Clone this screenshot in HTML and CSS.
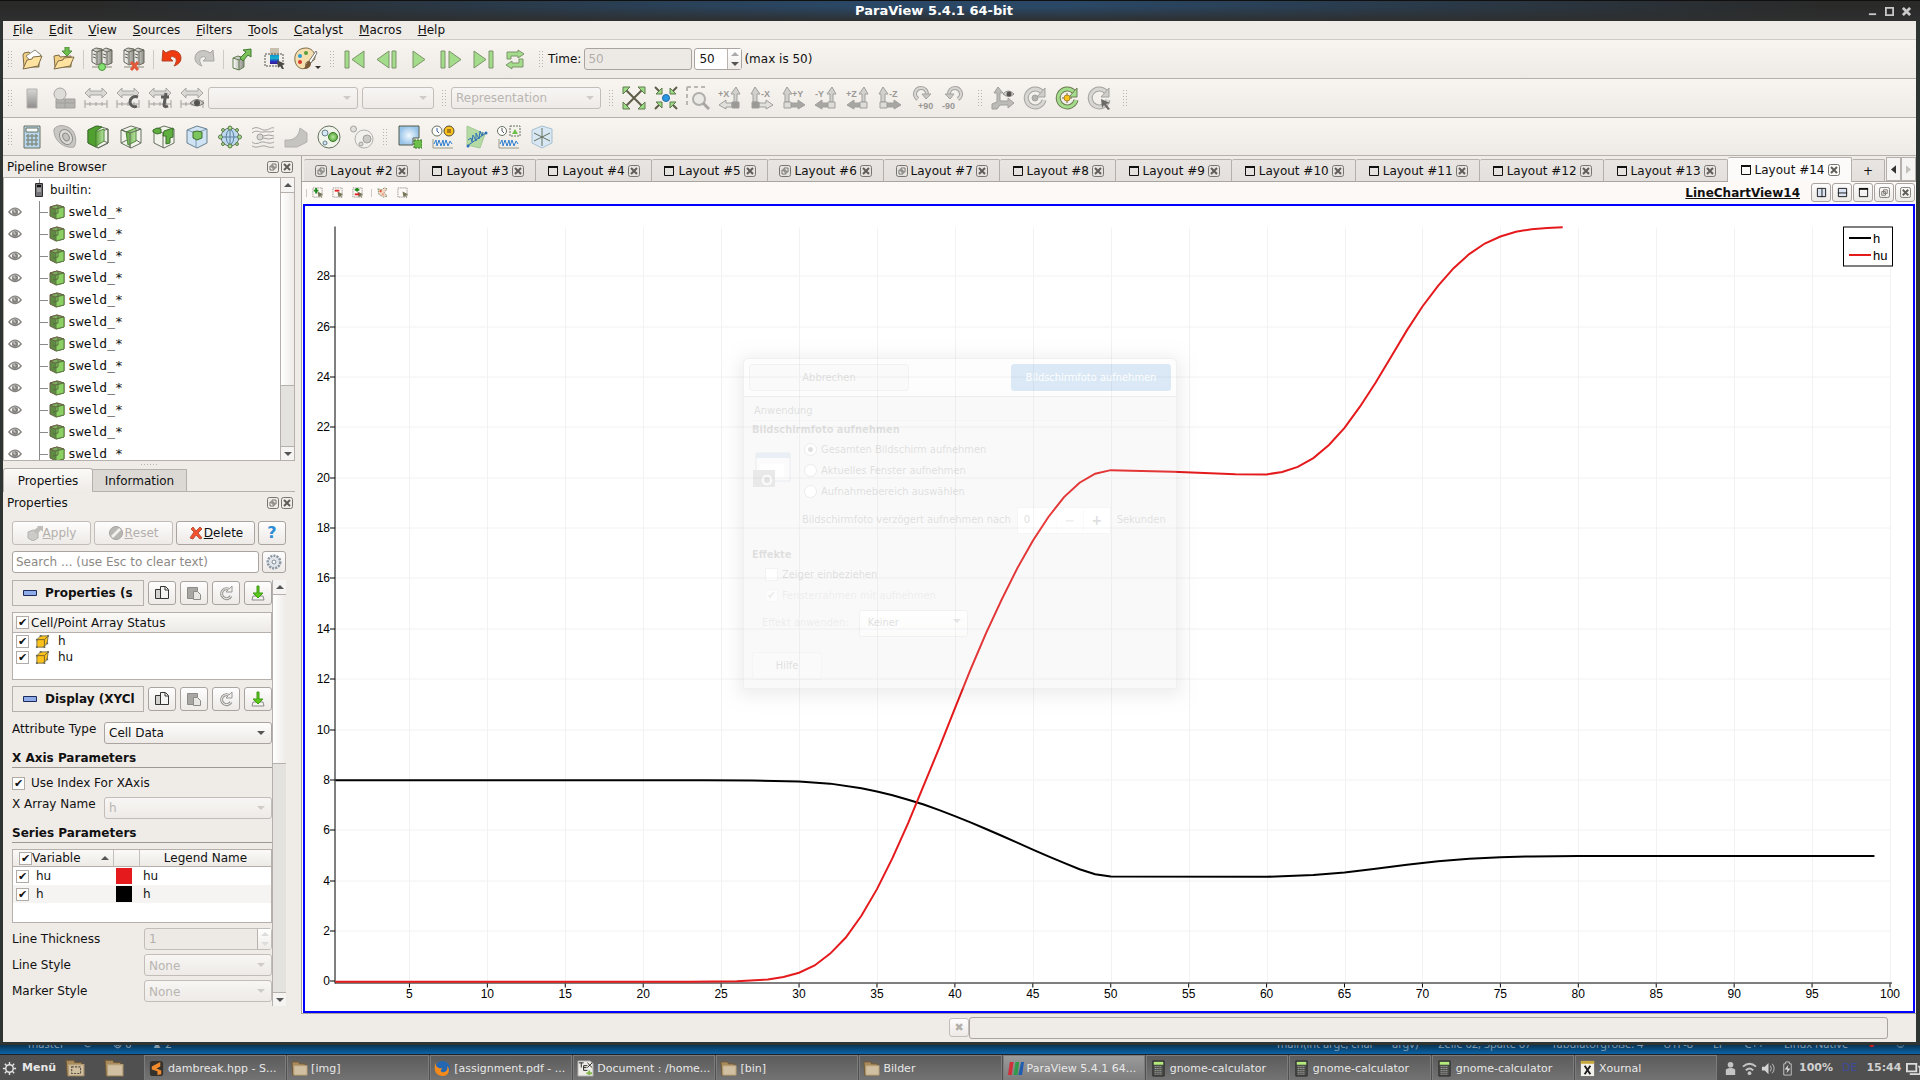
FILE: index.html
```html
<!DOCTYPE html>
<html lang="en">
<head>
<meta charset="utf-8">
<title>ParaView 5.4.1 64-bit</title>
<link rel="stylesheet" href="styles.css">
</head>
<body>
<svg class="defs" aria-hidden="true">
  <defs>
    <linearGradient id="g-steel" x1="0" y1="0" x2="1" y2="0"><stop offset="0" stop-color="#fff"/><stop offset="1" stop-color="#8c8c84"/></linearGradient>
    <linearGradient id="g-gray" x1="0" y1="0" x2="0" y2="1"><stop offset="0" stop-color="#d8d7d5"/><stop offset="1" stop-color="#8f8d8b"/></linearGradient>
    <linearGradient id="g-rain" x1="0" y1="0" x2="0" y2="1"><stop offset="0" stop-color="#0b8fd8"/><stop offset=".35" stop-color="#18b7c9"/><stop offset=".7" stop-color="#2438c8"/><stop offset="1" stop-color="#3a1a8c"/></linearGradient>
    <linearGradient id="g-green" x1="0" y1="0" x2="1" y2="0"><stop offset="0" stop-color="#5da53a"/><stop offset="1" stop-color="#b9e2a4"/></linearGradient>
    <radialGradient id="g-blue"><stop offset="0" stop-color="#f2f9ff"/><stop offset="1" stop-color="#97c3e8"/></radialGradient>
    <radialGradient id="g-ball"><stop offset="0" stop-color="#b8e8a0"/><stop offset="1" stop-color="#57a838"/></radialGradient>
  </defs>
  <symbol id="open" viewBox="0 0 24 24"><path d="M3 8l1-2 5-1 1 2 9-1v14H4z" fill="#f3cf83" stroke="#7d6a45"/><path d="M6 9l9-6 6 5-8 9z" fill="#fff" stroke="#8a8a78"/><path d="M3 22L7 13l5-1 1-2 9-1-4 10z" fill="#fde2a0" stroke="#7d6a45"/></symbol>
  <symbol id="save" viewBox="0 0 24 24"><path d="M2 9l5-1 1 2 11-1v11H3z" fill="#f3cf83" stroke="#7d6a45"/><path d="M2 22l4-8 5-1 1-2 10-1-4 9z" fill="#fde2a0" stroke="#7d6a45"/><path d="M13 0h4v4h3l-5 5-5-5h3z" fill="#6cc04a" stroke="#4f8a3a"/></symbol>
  <symbol id="towers" viewBox="0 0 24 24"><path d="M2 3l4-2 6 1v14l-5 2-5-3z" fill="url(#g-steel)" stroke="#66665a"/><path d="M12 3l4-2 6 2v13l-5 2-5-2z" fill="url(#g-steel)" stroke="#66665a"/><path d="M2 3l5 2v12M7 5l5-2M12 3l5 2v12M17 5l5-2M3 7l3 1M3 10l3 1M13 7l3 1M13 10l3 1" fill="none" stroke="#66665a"/></symbol>
  <symbol id="connect" viewBox="0 0 24 24"><use href="#towers"/><path d="M2 20h20" stroke="#8a8a78"/><circle cx="12" cy="20" r="3.500" fill="#84e070" stroke="#4d9a3c"/></symbol>
  <symbol id="disconnect" viewBox="0 0 24 24"><use href="#towers"/><path d="M2 20h20" stroke="#8a8a78"/><path d="M9 15l7 8M16 15l-7 8" stroke="#e2583a" stroke-width="3"/></symbol>
  <symbol id="undo" viewBox="0 0 24 24"><path d="M2 14L3 3l3 3c6-5 15-2 15 5 0 5-4 7-7 8 3-4 3-8 0-9-2-1-3 0-4 1l3 3z" fill="#ef3a10" stroke="#b3442a"/></symbol>
  <symbol id="redo" viewBox="0 0 24 24"><path d="M22 14L21 3l-3 3C12 1 3 4 3 11c0 5 4 7 7 8-3-4-3-8 0-9 2-1 3 0 4 1l-3 3z" fill="#c9c7c4" stroke="#a7a5a2"/></symbol>
  <symbol id="export" viewBox="0 0 24 24"><path d="M3 11l5-2 6 2v9l-5 3-6-2z" fill="url(#g-steel)" stroke="#5f7a4c"/><path d="M3 11l6 2v10M9 13l5-2" fill="none" stroke="#5f7a4c"/><path d="M10 11l6-6-3-2 8-1v8l-3-2-5 6z" fill="#7bbf5c" stroke="#3f7a2e"/></symbol>
  <symbol id="cmap" viewBox="0 0 24 24"><path d="M8 1h9v7H8z" fill="#c9bfae"/><path d="M8 8h9v9H8z" fill="url(#g-rain)"/><path d="M3 7h18v12H3z" fill="none" stroke="#55554a" stroke-dasharray="2 1"/><path d="M15 13l8 4-3 1 2 4-2 0-2-3-2 2z" fill="#4a4a44"/></symbol>
  <symbol id="palette" viewBox="0 0 24 24"><path d="M12 1C3 1 0 8 1 14c1 7 8 9 10 7s-1-4 2-6 8 1 8-5c0-5-4-9-9-9z" fill="#f6dfae" stroke="#7d6a45"/><circle cx="6" cy="9" r="2" fill="#2a9fd6"/><circle cx="12" cy="6" r="2" fill="#5a9e3c"/><circle cx="6" cy="15" r="2" fill="#d63a2a"/><path d="M22 4l-7 10 2 2 6-10z" fill="#fff" stroke="#777"/><path d="M15 14c-3 1-3 5-5 8 4 0 7-2 7-6z" fill="#7a5a34"/></symbol>
  <symbol id="first" viewBox="0 0 24 24"><path d="M2 4h4v17H2zM21 4v17L9 12.500z" fill="#a3dc8b" stroke="#7c9468"/></symbol>
  <symbol id="prev" viewBox="0 0 24 24"><path d="M17 4h4v17h-4zM14 4v17L2 12.500z" fill="#a3dc8b" stroke="#7c9468"/></symbol>
  <symbol id="play" viewBox="0 0 24 24"><path d="M6 4v17l12-8.500z" fill="#a3dc8b" stroke="#7c9468"/></symbol>
  <symbol id="next" viewBox="0 0 24 24"><path d="M2 4h4v17H2zM10 4v17l12-8.500z" fill="#a3dc8b" stroke="#7c9468"/></symbol>
  <symbol id="last" viewBox="0 0 24 24"><path d="M18 4h4v17h-4zM3 4v17l12-8.500z" fill="#a3dc8b" stroke="#7c9468"/></symbol>
  <symbol id="loop" viewBox="0 0 24 24"><path d="M4 12V5h11V3l6 4-6 4V9H8v3zM20 12v8H9v2l-6-4 6-4v2h7v-4z" fill="#a3dc8b" stroke="#7c9468"/></symbol>

  <symbol id="bar" viewBox="0 0 24 24"><path d="M7 3h10v19H7z" fill="url(#g-gray)" stroke="#b5b3b0"/></symbol>
  <symbol id="shapes" viewBox="0 0 24 24"><path d="M4 13h19v9H4zM13 13v9M4 17h19" fill="#b5b3b0" stroke="#a19f9c"/><circle cx="8" cy="8" r="6" fill="#dedcd9" stroke="#a8a6a3"/></symbol>
  <symbol id="range" viewBox="0 0 24 24"><path d="M1 7l5-5v3h12V2l5 5-5 5V9H6v3z" fill="#dad8d5" stroke="#a9a7a4"/><path d="M1 14v8M23 14v8M1 18h22M6 16v4M12 16v4M18 16v4" stroke="#a19f9c" fill="none"/></symbol>
  <symbol id="range-c" viewBox="0 0 24 24"><use href="#range"/><path d="M22 11c-5-2-8 2-8 5s3 6 7 4" fill="none" stroke="#5e5c5a" stroke-width="3"/></symbol>
  <symbol id="range-t" viewBox="0 0 24 24"><use href="#range"/><path d="M18 7l-2 12c0 2 2 2 4 1M13 11h8" fill="none" stroke="#5e5c5a" stroke-width="3"/></symbol>
  <symbol id="range-eye" viewBox="0 0 24 24"><use href="#range"/><path d="M10 17q7-7 14 0q-7 6-14 0z" fill="#c9c7c4" stroke="#77756f"/><circle cx="17" cy="17" r="3" fill="#55534f"/></symbol>

  <symbol id="reset-cam" viewBox="0 0 24 24"><path d="M4 4l16 16M20 4L4 20" stroke="#5e5e48" stroke-width="2"/><path d="M1 1h7L1 8zM23 1v7l-7-7zM1 23v-7l7 7zM23 23h-7l7-7z" fill="#9cdc84" stroke="#5e7a4c"/></symbol>
  <symbol id="zoom-data" viewBox="0 0 24 24"><path d="M1 1l5 5M23 1l-5 5M1 23l5-5M23 23l-5-5" stroke="#5e5e48" stroke-width="2"/><path d="M8 2v6H2zM16 2l6 6h-6zM8 22l-6-6h6zM16 22v-6h6z" fill="#9cdc84" stroke="#5e7a4c"/><circle cx="12" cy="12" r="3.500" fill="#2a98e0" stroke="#1c6aa4"/></symbol>
  <symbol id="zoom-box" viewBox="0 0 24 24"><path d="M1 1h19M1 1v19" stroke="#b9b7b4" stroke-width="2" stroke-dasharray="4 3"/><circle cx="13" cy="13" r="6" fill="#ebe9e6" stroke="#b1afac" stroke-width="2"/><path d="M17 17l6 6" stroke="#a8a6a3" stroke-width="3"/></symbol>
  <symbol id="ax-left" viewBox="0 0 24 24"><path d="M16 16V8h-3l5-7 4 7h-3v8z" fill="#d3d1ce" stroke="#a19f9c"/><path d="M14 17H8v-3l-7 5 7 4v-2h6z" fill="var(--arr)" stroke="#a19f9c"/><path d="M14 16h7v6h-7z" fill="var(--sq)" stroke="#a19f9c"/></symbol>
  <symbol id="ax-right" viewBox="0 0 24 24"><path d="M3 16V8H1l4-7 5 7H7v8z" fill="#d3d1ce" stroke="#a19f9c"/><path d="M9 17h7v-3l7 5-7 4v-2H9z" fill="var(--arr)" stroke="#a19f9c"/><path d="M2 16h7v6H2z" fill="var(--sq)" stroke="#a19f9c"/></symbol>
  <symbol id="rot-cw" viewBox="0 0 24 24"><path d="M8 13C2 9 6 2 11 2c4 0 6 3 6 6" fill="none" stroke="#a5a3a0" stroke-width="4"/><path d="M8 13C2 9 6 2 11 2c4 0 6 3 6 6" fill="none" stroke="#d9d7d4" stroke-width="2"/><path d="M12 8h9l-5 5z" fill="#c9c7c4" stroke="#a5a3a0"/></symbol>
  <symbol id="rot-ccw" viewBox="0 0 24 24"><path d="M16 13c6-4 2-11-3-11-4 0-6 3-6 6" fill="none" stroke="#a5a3a0" stroke-width="4"/><path d="M16 13c6-4 2-11-3-11-4 0-6 3-6 6" fill="none" stroke="#d9d7d4" stroke-width="2"/><path d="M12 8H3l5 5z" fill="#c9c7c4" stroke="#a5a3a0"/></symbol>
  <symbol id="axes-eye" viewBox="0 0 24 24"><path d="M6 16V7H3l4-6 5 6H9v8h8v-3l6 5-6 5v-3H9l-3 4H1v-5z" fill="#bdbbb8" stroke="#a19f9c"/><path d="M12 8q5-6 11 0q-5 5-11 0z" fill="#d6d4d1" stroke="#8d8b88"/><circle cx="18" cy="8" r="2.500" fill="#55534f"/></symbol>
  <symbol id="center" viewBox="0 0 24 24"><path d="M19 6a9 9 0 1 0 2 8" fill="none" stroke="#a5a3a0" stroke-width="5"/><path d="M19 6a9 9 0 1 0 2 8" fill="none" stroke="#d9d7d4" stroke-width="3"/><path d="M22 2v9h-8z" fill="#d0cecb" stroke="#a5a3a0"/><circle cx="12" cy="12" r="3" fill="#b5b3b0" stroke="#a5a3a0"/></symbol>
  <symbol id="center-on" viewBox="0 0 24 24"><path d="M19 6a9 9 0 1 0 2 8" fill="none" stroke="#6d7a52" stroke-width="5"/><path d="M19 6a9 9 0 1 0 2 8" fill="none" stroke="#a3dc8b" stroke-width="3"/><path d="M22 2v9h-8z" fill="#a3dc8b" stroke="#6d7a52"/><path d="M12 7v10M7 12h10" stroke="#6d6a42"/><circle cx="12" cy="12" r="3" fill="#fbc21a" stroke="#a8842a"/></symbol>
  <symbol id="center-pick" viewBox="0 0 24 24"><path d="M19 6a9 9 0 1 0 2 8" fill="none" stroke="#a5a3a0" stroke-width="5"/><path d="M19 6a9 9 0 1 0 2 8" fill="none" stroke="#d9d7d4" stroke-width="3"/><path d="M22 2v9h-8z" fill="#d0cecb" stroke="#a5a3a0"/><path d="M14 13l9 4-4 1 4 5-2 1-4-5-2 3z" fill="#6c6a68"/></symbol>

  <symbol id="calc" viewBox="0 0 24 24"><path d="M4 1h16v22H4z" fill="#b9d8ef" stroke="#66705e"/><path d="M6 3h12v4H6z" fill="#f4fafd" stroke="#66705e"/><path d="M7 10h2v2H7zM11 10h2v2h-2zM15 10h2v2h-2zM7 14h2v2H7zM11 14h2v2h-2zM15 14h2v2h-2zM7 18h2v2H7zM11 18h2v2h-2zM15 18h2v2h-2z" fill="#fff" stroke="#66705e"/></symbol>
  <symbol id="contour" viewBox="0 0 24 24"><path d="M1 4c4-5 12-4 17 0s6 13 3 18C12 24 0 16 1 4z" fill="#c9c7c4" stroke="#a8a6a3"/><ellipse cx="13" cy="12" rx="6" ry="8" fill="#dddbd8" stroke="#8f8d8a" transform="rotate(-30 13 12)"/><ellipse cx="13" cy="12" rx="3" ry="4" fill="#c4c2bf" stroke="#8f8d8a" transform="rotate(-30 13 12)"/></symbol>
  <symbol id="cube-wire" viewBox="0 0 24 24"><path d="M2 5l10-4 10 3v14l-10 5-10-5zM2 5l9 3 11-4M11 8v15" fill="#f2f4ec" stroke="#66705e"/></symbol>
  <symbol id="clip" viewBox="0 0 24 24"><use href="#cube-wire"/><path d="M2 5l8-4 6 1-6 4v16l-8-4z" fill="#4fa02e" stroke="#3d6e2c"/><path d="M10 7l8-3v12l-8 5z" fill="url(#g-green)" stroke="#4c8a36"/><path d="M22 4v14l-10 5M18 16l4 2" fill="none" stroke="#66705e"/></symbol>
  <symbol id="slice" viewBox="0 0 24 24"><use href="#cube-wire"/><path d="M7 7l10-4v13l-8 4z" fill="url(#g-green)" stroke="#4c8a36"/><path d="M2 5l9 3 11-4M11 8v15M2 18l6-3M17 15l5 3" fill="none" stroke="#66705e"/></symbol>
  <symbol id="thresh" viewBox="0 0 24 24"><use href="#cube-wire"/><path d="M1 5l4-2 4 1v4l-4 1-4-2zM12 6l9-3v9l-3 1v5l-4 1v-8h-3z" fill="#5fae40" stroke="#3d6e2c"/></symbol>
  <symbol id="subset" viewBox="0 0 24 24"><path d="M2 5l10-4 10 3v14l-10 5-10-5z" fill="#cfe3f4" stroke="#66808e"/><path d="M2 5l9 3 11-4M11 8v15" fill="none" stroke="#7f9cb4"/><path d="M8 7l4-1 5 1v6l-5 2-4-2z" fill="#7cc45e" stroke="#3d6e2c"/></symbol>
  <symbol id="glyph" viewBox="0 0 24 24"><circle cx="12" cy="12" r="9" fill="#bcd9f0" stroke="#66705e"/><path d="M3 12h18M12 3v18M12 3q-8 9 0 18M12 3q8 9 0 18" fill="none" stroke="#5b7f9b"/><g fill="#a3dc8b" stroke="#5e7a4c"><circle cx="12" cy="3" r="2"/><circle cx="12" cy="21" r="2"/><circle cx="2.500" cy="12" r="2"/><circle cx="21.500" cy="12" r="2"/><circle cx="5" cy="5" r="1.500"/><circle cx="19" cy="5" r="1.500"/><circle cx="5" cy="19" r="1.500"/><circle cx="19" cy="19" r="1.500"/></g></symbol>
  <symbol id="stream" viewBox="0 0 24 24"><path d="M1 4c6-4 9 2 14 1s5-3 8-2M1 8c5-4 8 0 11-1s8 1 11-1M1 17c5 4 8-1 12 0s6 2 10 0M1 21c5 3 9-1 13 0s5 2 9 1" fill="none" stroke="#a3a19e"/><circle cx="9" cy="12" r="3" fill="#dad8d5" stroke="#a3a19e"/><path d="M12 11q6-2 11 0M12 13q6 2 11 0" fill="none" stroke="#a3a19e"/></symbol>
  <symbol id="warp" viewBox="0 0 24 24"><path d="M1 15c9 1 14-4 15-12l7 5v9l-10 5H1z" fill="#c6c4c1" stroke="#b3b1ae"/></symbol>
  <symbol id="group" viewBox="0 0 24 24"><circle cx="12" cy="12" r="11" fill="#f0f4ea" stroke="#66705e"/><circle cx="16" cy="12" r="4.500" fill="url(#g-ball)" stroke="#3d7a2c"/><circle cx="8" cy="8" r="3" fill="#d4e6f4" stroke="#66808e"/><circle cx="8" cy="18" r="2" fill="#d4e6f4" stroke="#66808e"/></symbol>
  <symbol id="extract" viewBox="0 0 24 24"><circle cx="14" cy="14" r="9" fill="#f2f0ed" stroke="#b3b1ae"/><circle cx="3.500" cy="4" r="3" fill="#e2e0dd" stroke="#a3a19e"/><circle cx="17" cy="14" r="4" fill="#cbc9c6" stroke="#a3a19e"/><circle cx="11" cy="19" r="2" fill="#dad8d5" stroke="#a3a19e"/></symbol>
  <symbol id="sel-sq" viewBox="0 0 24 24"><path d="M1 1h20v12h-6v7H1z" fill="url(#g-blue)" stroke="#555a4a"/><path d="M16 15h8v8h-8z" fill="#6cc04a" stroke="#3d6e2c" stroke-dasharray="2 1"/></symbol>
  <symbol id="wave" viewBox="0 0 24 24"><path d="M2 14v9h20" fill="none" stroke="#9a9a88"/><path d="M3 19l2-4 1 6 2-6 2 6 2-6 1 6 2-6 2 6 2-5 2 3" fill="none" stroke="#2f7fd0"/></symbol>
  <symbol id="plot-time" viewBox="0 0 24 24"><circle cx="6" cy="6" r="5" fill="#fff" stroke="#66705e"/><path d="M6 3v3l2 2" fill="none" stroke="#2f5fa0"/><circle cx="18" cy="6" r="5" fill="#fbc21a" stroke="#4c4a3a"/><path d="M16 4h4v4h-4z" fill="#a87c1a"/><use href="#wave"/></symbol>
  <symbol id="plot-line" viewBox="0 0 24 24"><path d="M3 1l18 8-5 14L3 20z" fill="#b4dba4" stroke="#a4c894"/><path d="M3 21L22 8" stroke="#2f6fb8"/><path d="M4 15l3-2 1 4 1-7 3 6 0-8 3 6 1-8 2 5 1-4" fill="none" stroke="#2f6fb8"/><circle cx="4" cy="21" r="1.500" fill="#2f6fb8"/><circle cx="22" cy="8" r="1.500" fill="#2f6fb8"/></symbol>
  <symbol id="plot-sel" viewBox="0 0 24 24"><circle cx="5" cy="6" r="4.500" fill="#fff" stroke="#66705e"/><path d="M5 3v3l2 2" fill="none" stroke="#555"/><path d="M13 1h10v10H13z" fill="none" stroke="#66705e" stroke-dasharray="2 1"/><path d="M18 4l3 5h-6z" fill="#6cc04a"/><use href="#wave"/></symbol>
  <symbol id="probe" viewBox="0 0 24 24"><path d="M2 5l10-4 10 3v14l-10 5-10-5z" fill="#d7e8f4" stroke="#a9bfce"/><path d="M12 3v18M4 8l16 8M4 16l16-8" stroke="#66705e" fill="none"/></symbol>

  <symbol id="eye" viewBox="0 0 16 12"><path d="M1 6q7-9 14 0q-7 8-14 0z" fill="#fff" stroke="#85837f" stroke-width="1.500"/><circle cx="8" cy="6" r="3.500" fill="#85837f"/><path d="M7 3v3h2" stroke="#ddd" fill="none"/></symbol>
  <symbol id="cube" viewBox="0 0 16 16"><path d="M1 3l7-2 7 2v10l-8 2-6-3z" fill="#5e8a44" stroke="#6b6045"/><path d="M1 3l5 2 9-2-7-2z" fill="#7fae60" stroke="#6b6045"/><path d="M7 5l8-2v10l-8 2z" fill="#8ad062" stroke="#5a7a42"/><path d="M9 2v7l-5 1" stroke="#5a6b40" fill="none"/></symbol>
  <symbol id="server" viewBox="0 0 8 14"><path d="M.500.500h7v13h-7z" fill="#77757a" stroke="#2e2e2e"/><path d="M2 2h4v2H2z" fill="#111"/><path d="M2 6h4M2 8h4" stroke="#ccc"/></symbol>
  <symbol id="float" viewBox="0 0 12 12"><rect x=".500" y=".500" width="11" height="11" rx="2" fill="none" stroke="#77756f"/><path d="M5 3h4v4H5zM3 5h4v4H3z" fill="#f3f1ee" stroke="#77756f"/></symbol>
  <symbol id="close" viewBox="0 0 12 12"><rect x=".500" y=".500" width="11" height="11" rx="2" fill="none" stroke="#77756f"/><path d="M3 3l6 6M9 3L3 9" stroke="#5f5d58" stroke-width="2"/></symbol>
  <symbol id="win" viewBox="0 0 12 12"><path d="M1.500 2h9v8.500h-9z" fill="none" stroke="#111"/><path d="M1 2h10" stroke="#111" stroke-width="2"/></symbol>
  <symbol id="split-h" viewBox="0 0 12 12"><path d="M1.500 1.500h9v9h-9zM6.500 2v9" fill="#dce4f4" stroke="#111"/></symbol>
  <symbol id="split-v" viewBox="0 0 12 12"><path d="M1.500 1.500h9v9h-9zM1 6.500h10" fill="#dce4f4" stroke="#111"/></symbol>
  <symbol id="s-box" viewBox="0 0 12 12"><path d="M1 1h10v10H1z" fill="none" stroke="#77756f" stroke-dasharray="1 1"/><path d="M6 5l6 3-2 1 1 3-2-2-2 1z" fill="#77775a"/></symbol>
  <symbol id="s-add" viewBox="0 0 12 12"><use href="#s-box"/><path d="M2 4h5M4.500 1v6" stroke="#1c8a1c" stroke-width="2"/></symbol>
  <symbol id="s-sub" viewBox="0 0 12 12"><use href="#s-box"/><path d="M3 4h5" stroke="#e02020" stroke-width="2"/></symbol>
  <symbol id="s-tog" viewBox="0 0 12 12"><use href="#s-box"/><path d="M3 3h5M5.500 1v4" stroke="#1c8a1c" stroke-width="2"/><path d="M3 8h5" stroke="#e02020" stroke-width="2"/></symbol>
  <symbol id="s-poly" viewBox="0 0 12 12"><path d="M1 2l4 1 3-2 3 1-3 4 3 4-4 1-5-3z" fill="#f4d8c4" stroke="#7a8a6a" stroke-dasharray="2 1"/><path d="M3 4l2 1M6 8l1 0" stroke="#e05030" stroke-width="2"/></symbol>

  <symbol id="no" viewBox="0 0 16 16"><circle cx="8" cy="8" r="6.500" fill="#b9b7b4" stroke="#a5a3a0"/><path d="M3 11l8-8 2 2-8 8z" fill="#f3f1ee"/></symbol>
  <symbol id="apply" viewBox="0 0 16 16"><path d="M1 7l5-2 5 1v7l-5 3-5-3z" fill="#cdcbc8" stroke="#b3b1ae"/><path d="M6 6l5-4-1-1h6v6l-2-2-4 4" fill="#bfbdba"/></symbol>
  <symbol id="del" viewBox="0 0 16 16"><path d="M3 4l2-2 3 4 4-4 2 2-4 4 4 5-2 1-4-4-3 4-3-1 4-6z" fill="#f4512c" stroke="#b8553c"/></symbol>
  <symbol id="gear" viewBox="0 0 16 16"><circle cx="8" cy="8" r="6" fill="#e4e8ec" stroke="#8c98a4" stroke-width="3" stroke-dasharray="2 1"/><circle cx="8" cy="8" r="5" fill="#e4e8ec"/><circle cx="8" cy="8" r="2" fill="#fff" stroke="#7a8a98"/></symbol>
  <symbol id="copy" viewBox="0 0 16 16"><path d="M1.500 4.500h7v9h-7z" fill="#d4d2cf" stroke="#333"/><path d="M6.500 1.500h5l3 3v9h-8z" fill="#f4f4f2" stroke="#333"/><path d="M11 2v3h3" fill="none" stroke="#333"/></symbol>
  <symbol id="paste" viewBox="0 0 16 16"><path d="M1.500 2.500h10v11h-10z" fill="#a9a7a4" stroke="#8d8b88"/><path d="M7.500 6.500h4l3 3v5h-7z" fill="#e8e6e3" stroke="#8d8b88"/></symbol>
  <symbol id="reload" viewBox="0 0 16 16"><path d="M12 5a5 5 0 1 0 1 6" fill="none" stroke="#9a9895" stroke-width="3"/><path d="M14 1v6H8z" fill="#f3f1ee" stroke="#9a9895"/><path d="M12 5a5 5 0 1 0 1 6" fill="none" stroke="#f3f1ee"/></symbol>
  <symbol id="store" viewBox="0 0 16 16"><path d="M3 11h10l1 4H2z" fill="#f4f4f2" stroke="#8d8b88"/><path d="M7 1h2v7h4l-5 5-5-5h4z" fill="#5cc81c" stroke="#3f9a14"/></symbol>
  <symbol id="ycube" viewBox="0 0 16 16"><path d="M2 6l4-4h8l-1 8-4 4H2z" fill="#fbc21a" stroke="#77704c"/><path d="M2 6h8v8M10 6l4-4" fill="none" stroke="#77602c"/><path d="M1 5h2v2H1zM5 1h2v2H5zM13 1h2v2h-2zM1 13h2v2H1zM9 13h2v2H9zM12 9h2v2h-2z" fill="#6b6b5c"/></symbol>
  <symbol id="minus" viewBox="0 0 14 6"><path d="M.500.500h13v5H.500z" fill="#8fabe8" stroke="#1c2a5c"/></symbol>

  <symbol id="cog" viewBox="0 0 16 16"><circle cx="8" cy="8" r="4" fill="none" stroke="#e4e4e4" stroke-width="1.500"/><path d="M8 1v3M8 12v3M1 8h3M12 8h3M3 3l2 2M11 11l2 2M13 3l-2 2M5 11l-2 2" stroke="#e4e4e4" stroke-width="1.500"/></symbol>
  <symbol id="folder" viewBox="0 0 18 18"><path d="M1 2h7l1 2h6v12H2z" fill="#a88a5c" stroke="#6e5836"/><path d="M3 6h14v10H3z" fill="#d0bfa0" stroke="#b49c74"/></symbol>
  <symbol id="folder-d" viewBox="0 0 18 18"><use href="#folder"/><path d="M6 8h8v6H6z" fill="none" stroke="#5e5240" stroke-dasharray="2 1"/></symbol>
  <symbol id="subl" viewBox="0 0 18 18"><rect x="2" y="1" width="14" height="16" rx="3" fill="#35322e"/><path d="M4 7l9-5v5l-4 2 5 2v4l-4 1v-4l-6-2z" fill="#f08a2c"/></symbol>
  <symbol id="fox" viewBox="0 0 18 18"><circle cx="9" cy="9" r="8" fill="#2468b4"/><path d="M2 3c0 5 2 6 7 6-3 2-2 4 1 4s5-3 4-7c3 3 3 11-5 11S-1 9 2 3z" fill="#f48a1c"/></symbol>
  <symbol id="tex" viewBox="0 0 18 18"><path d="M1 1h13l3 3v13H1z" fill="#eeece6" stroke="#aaa"/><path d="M2 3h5M4.500 3v5M7 6h4M7 6v5h4M7 8h3M11 3l5 5M16 3l-5 5" stroke="#222" fill="none"/><path d="M13 11v5M10 14h6" stroke="#84b44c" stroke-width="2"/></symbol>
  <symbol id="pv" viewBox="0 0 18 18"><path d="M3 2h4L5 16H1z" fill="#d0303a"/><path d="M9 2h4l-2 14H7z" fill="#2f9a4a"/><path d="M15 2h3l-2 14h-4z" fill="#1f5cb0"/></symbol>
  <symbol id="gcalc" viewBox="0 0 18 18"><path d="M3 1h12v16H3z" fill="#4a4c48" stroke="#2c2c2c"/><path d="M4 2h10v3H4z" fill="#b4ec7c"/><path d="M5 7h8M5 9h8M5 11h8M5 13h8M5 15h8" stroke="#c8c8c4" stroke-dasharray="1 1"/></symbol>
  <symbol id="xour" viewBox="0 0 18 18"><path d="M2 1h14v16H2z" fill="#f2f0ea"/><path d="M2 1h14v3H2z" fill="#c8a83c"/><path d="M6 6l6 9M12 6l-6 9" stroke="#1c1c1c" stroke-width="2"/></symbol>
  <symbol id="person" viewBox="0 0 16 16"><circle cx="8" cy="4" r="3" fill="#c4c4c4"/><path d="M3 15V9q5-3 10 0v6z" fill="#c4c4c4"/></symbol>
  <symbol id="wifi" viewBox="0 0 16 16"><path d="M1 6q7-6 14 0M4 10q4-4 8 0" fill="none" stroke="#c4c4c4" stroke-width="2"/><circle cx="8" cy="13" r="2" fill="#c4c4c4"/></symbol>
  <symbol id="vol" viewBox="0 0 16 16"><path d="M1 6h3l4-4v12l-4-4H1z" fill="#d4d4d4"/><path d="M10 5q2 3 0 6M12 3q4 5 0 10" fill="none" stroke="#c4c4c4"/></symbol>
  <symbol id="batt" viewBox="0 0 16 16"><path d="M4 3h2V1h4v2h2v12H4z" fill="none" stroke="#c4c4c4"/><path d="M9 4l-4 5h3l-1 4 4-5H8z" fill="#e4e4e4"/></symbol>
  <symbol id="desk" viewBox="0 0 16 16"><path d="M1 3h10v8H1zM13 6h2v8H5v-1" fill="none" stroke="#dcdcdc" stroke-width="2"/></symbol>
  <symbol id="shot" viewBox="0 0 40 40"><path d="M4 2h34v28H4z" fill="#e8eaee" stroke="#5c7494"/><path d="M4 2h34v5H4z" fill="#7494bc"/><path d="M8 13h24v14H8z" fill="#fff"/><path d="M1 19h22v17H1z" fill="#6c6c6c"/><circle cx="15" cy="29" r="6" fill="#ddd" stroke="#555"/><circle cx="15" cy="29" r="3" fill="#444"/></symbol>
</svg>

<div class="window">
  <header class="titlebar">
    <h1>ParaView 5.4.1 64-bit</h1>
    <div class="winbtns">
      <button aria-label="Minimize"><svg viewBox="0 0 10 10"><path d="M1 8h8" stroke="#c8c8c8" stroke-width="2"/></svg></button>
      <button aria-label="Maximize"><svg viewBox="0 0 10 10"><path d="M1 1h8v8H1z" fill="none" stroke="#c8c8c8" stroke-width="2"/></svg></button>
      <button aria-label="Close window"><svg viewBox="0 0 10 10"><path d="M1 1l8 8M9 1L1 9" stroke="#c8c8c8" stroke-width="3"/></svg></button>
    </div>
  </header>

  <nav class="menubar">
    <button><u>F</u>ile</button><button><u>E</u>dit</button><button><u>V</u>iew</button><button><u>S</u>ources</button><button><u>F</u>ilters</button><button><u>T</u>ools</button><button><u>C</u>atalyst</button><button><u>M</u>acros</button><button><u>H</u>elp</button>
  </nav>

  <div class="toolbar">
    <i class="grip"></i>
    <button class="tool" aria-label="Open"><svg><use href="#open"/></svg></button>
    <button class="tool" aria-label="Save data"><svg><use href="#save"/></svg></button>
    <i class="sep"></i>
    <button class="tool" aria-label="Connect"><svg><use href="#connect"/></svg></button>
    <button class="tool" aria-label="Disconnect"><svg><use href="#disconnect"/></svg></button>
    <i class="sep"></i>
    <button class="tool" aria-label="Undo"><svg><use href="#undo"/></svg></button>
    <button class="tool" aria-label="Redo"><svg><use href="#redo"/></svg></button>
    <i class="sep"></i>
    <button class="tool" aria-label="Auto apply"><svg><use href="#export"/></svg></button>
    <button class="tool" aria-label="Find data"><svg><use href="#cmap"/></svg></button>
    <button class="tool drop" aria-label="Color palette"><svg><use href="#palette"/></svg></button>
    <i class="grip wide"></i>
    <button class="tool" aria-label="First frame"><svg><use href="#first"/></svg></button>
    <button class="tool" aria-label="Previous frame"><svg><use href="#prev"/></svg></button>
    <button class="tool" aria-label="Play"><svg><use href="#play"/></svg></button>
    <button class="tool" aria-label="Next frame"><svg><use href="#next"/></svg></button>
    <button class="tool" aria-label="Last frame"><svg><use href="#last"/></svg></button>
    <button class="tool" aria-label="Loop"><svg><use href="#loop"/></svg></button>
    <i class="grip wide"></i>
    <label class="time-label" for="time">Time:</label>
    <input id="time" class="field time" value="50" disabled>
    <span class="spin"><input aria-label="Time step" value="50"><span class="steps"><button aria-label="Step up" class="up off"></button><button aria-label="Step down" class="down"></button></span></span>
    <span class="max">(max is 50)</span>
  </div>

  <div class="toolbar">
    <i class="grip"></i>
    <button class="tool" aria-label="Color legend"><svg><use href="#bar"/></svg></button>
    <button class="tool" aria-label="Edit color map"><svg><use href="#shapes"/></svg></button>
    <button class="tool" aria-label="Rescale to data"><svg><use href="#range"/></svg></button>
    <button class="tool" aria-label="Rescale to custom"><svg><use href="#range-c"/></svg></button>
    <button class="tool" aria-label="Rescale over time"><svg><use href="#range-t"/></svg></button>
    <button class="tool" aria-label="Rescale to visible"><svg><use href="#range-eye"/></svg></button>
    <span class="combo off w150"><select aria-label="Coloring" disabled><option></option></select></span>
    <span class="combo off w72"><select aria-label="Component" disabled><option></option></select></span>
    <i class="grip wide"></i>
    <span class="combo off w150"><select aria-label="Representation" disabled><option>Representation</option></select></span>
    <i class="grip wide"></i>
    <button class="tool" aria-label="Reset camera"><svg><use href="#reset-cam"/></svg></button>
    <button class="tool" aria-label="Zoom to data"><svg><use href="#zoom-data"/></svg></button>
    <button class="tool" aria-label="Zoom to box"><svg><use href="#zoom-box"/></svg></button>
    <button class="tool sq-dark" aria-label="Set view direction +X"><svg viewBox="0 0 24 24"><use href="#ax-left"/><text x="0" y="11">+X</text></svg></button>
    <button class="tool sq-dark" aria-label="Set view direction -X"><svg viewBox="0 0 24 24"><use href="#ax-right"/><text x="11" y="11">-X</text></svg></button>
    <button class="tool ar-dark" aria-label="Set view direction +Y"><svg viewBox="0 0 24 24"><use href="#ax-right"/><text x="10" y="11">+Y</text></svg></button>
    <button class="tool ar-dark" aria-label="Set view direction -Y"><svg viewBox="0 0 24 24"><use href="#ax-left"/><text x="1" y="11">-Y</text></svg></button>
    <button class="tool ar-dark" aria-label="Set view direction +Z"><svg viewBox="0 0 24 24"><use href="#ax-left"/><text x="0" y="11">+Z</text></svg></button>
    <button class="tool ar-dark" aria-label="Set view direction -Z"><svg viewBox="0 0 24 24"><use href="#ax-right"/><text x="11" y="11">-Z</text></svg></button>
    <button class="tool" aria-label="Rotate clockwise"><svg viewBox="0 0 24 24"><use href="#rot-cw"/><text x="8" y="23">+90</text></svg></button>
    <button class="tool" aria-label="Rotate counterclockwise"><svg viewBox="0 0 24 24"><use href="#rot-ccw"/><text x="0" y="23">-90</text></svg></button>
    <i class="grip wide"></i>
    <button class="tool" aria-label="Orientation axes"><svg><use href="#axes-eye"/></svg></button>
    <button class="tool" aria-label="Show center"><svg><use href="#center"/></svg></button>
    <button class="tool" aria-label="Reset center"><svg><use href="#center-on"/></svg></button>
    <button class="tool" aria-label="Pick center"><svg><use href="#center-pick"/></svg></button>
    <i class="grip wide"></i>
  </div>

  <div class="toolbar filters">
    <i class="grip"></i>
    <button class="tool" aria-label="Calculator"><svg><use href="#calc"/></svg></button>
    <button class="tool" aria-label="Contour"><svg><use href="#contour"/></svg></button>
    <button class="tool" aria-label="Clip"><svg><use href="#clip"/></svg></button>
    <button class="tool" aria-label="Slice"><svg><use href="#slice"/></svg></button>
    <button class="tool" aria-label="Threshold"><svg><use href="#thresh"/></svg></button>
    <button class="tool" aria-label="Extract subset"><svg><use href="#subset"/></svg></button>
    <button class="tool" aria-label="Glyph"><svg><use href="#glyph"/></svg></button>
    <button class="tool" aria-label="Stream tracer"><svg><use href="#stream"/></svg></button>
    <button class="tool" aria-label="Warp"><svg><use href="#warp"/></svg></button>
    <button class="tool" aria-label="Group datasets"><svg><use href="#group"/></svg></button>
    <button class="tool" aria-label="Extract level"><svg><use href="#extract"/></svg></button>
    <i class="grip wide"></i>
    <button class="tool" aria-label="Extract selection"><svg><use href="#sel-sq"/></svg></button>
    <button class="tool" aria-label="Plot global variables"><svg><use href="#plot-time"/></svg></button>
    <button class="tool" aria-label="Plot over line"><svg><use href="#plot-line"/></svg></button>
    <button class="tool" aria-label="Plot selection"><svg><use href="#plot-sel"/></svg></button>
    <button class="tool" aria-label="Probe"><svg><use href="#probe"/></svg></button>
  </div>

  <main class="work">
    <aside class="side">
      <div class="dock-head"><span>Pipeline Browser</span><button aria-label="Float"><svg><use href="#float"/></svg></button><button aria-label="Close"><svg><use href="#close"/></svg></button></div>
      <div class="tree-box">
        <ul class="tree">
          <li class="root"><svg><use href="#server"/></svg>builtin:</li>
          <li><svg class="eye"><use href="#eye"/></svg><i></i><svg class="cube"><use href="#cube"/></svg>sweld_*</li>
          <li><svg class="eye"><use href="#eye"/></svg><i></i><svg class="cube"><use href="#cube"/></svg>sweld_*</li>
          <li><svg class="eye"><use href="#eye"/></svg><i></i><svg class="cube"><use href="#cube"/></svg>sweld_*</li>
          <li><svg class="eye"><use href="#eye"/></svg><i></i><svg class="cube"><use href="#cube"/></svg>sweld_*</li>
          <li><svg class="eye"><use href="#eye"/></svg><i></i><svg class="cube"><use href="#cube"/></svg>sweld_*</li>
          <li><svg class="eye"><use href="#eye"/></svg><i></i><svg class="cube"><use href="#cube"/></svg>sweld_*</li>
          <li><svg class="eye"><use href="#eye"/></svg><i></i><svg class="cube"><use href="#cube"/></svg>sweld_*</li>
          <li><svg class="eye"><use href="#eye"/></svg><i></i><svg class="cube"><use href="#cube"/></svg>sweld_*</li>
          <li><svg class="eye"><use href="#eye"/></svg><i></i><svg class="cube"><use href="#cube"/></svg>sweld_*</li>
          <li><svg class="eye"><use href="#eye"/></svg><i></i><svg class="cube"><use href="#cube"/></svg>sweld_*</li>
          <li><svg class="eye"><use href="#eye"/></svg><i></i><svg class="cube"><use href="#cube"/></svg>sweld_*</li>
          <li><svg class="eye"><use href="#eye"/></svg><i></i><svg class="cube"><use href="#cube"/></svg>sweld_*</li>
        </ul>
        <div class="scroll"><b class="up"></b><span class="thumb t-tree"></span><span class="trough"></span><b class="down"></b></div>
      </div>
      <div class="splitter"></div>
      <div class="dock-tabs"><button class="on">Properties</button><button>Information</button></div>
      <div class="dock-head props"><span>Properties</span><button aria-label="Float"><svg><use href="#float"/></svg></button><button aria-label="Close"><svg><use href="#close"/></svg></button></div>
      <div class="actions">
        <button class="btn" disabled><svg><use href="#apply"/></svg><u>A</u>pply</button>
        <button class="btn" disabled><svg><use href="#no"/></svg><u>R</u>eset</button>
        <button class="btn"><svg><use href="#del"/></svg><u>D</u>elete</button>
        <button class="btn help">?</button>
      </div>
      <div class="search"><input class="field" aria-label="Search" placeholder="Search ... (use Esc to clear text)"><button class="btn" aria-label="Advanced"><svg><use href="#gear"/></svg></button></div>
      <div class="props-scroll">
        <div class="props-body">
          <div class="group"><h2><svg><use href="#minus"/></svg>Properties (s</h2>
            <button class="btn" aria-label="Copy"><svg><use href="#copy"/></svg></button><button class="btn" aria-label="Paste"><svg><use href="#paste"/></svg></button><button class="btn" aria-label="Restore"><svg><use href="#reload"/></svg></button><button class="btn" aria-label="Save"><svg><use href="#store"/></svg></button></div>
          <div class="list">
            <label class="list-head"><input type="checkbox" checked>Cell/Point Array Status</label>
            <label><input type="checkbox" checked><svg><use href="#ycube"/></svg>h</label>
            <label><input type="checkbox" checked><svg><use href="#ycube"/></svg>hu</label>
          </div>
          <div class="group"><h2><svg><use href="#minus"/></svg>Display (XYCl</h2>
            <button class="btn" aria-label="Copy"><svg><use href="#copy"/></svg></button><button class="btn" aria-label="Paste"><svg><use href="#paste"/></svg></button><button class="btn" aria-label="Restore"><svg><use href="#reload"/></svg></button><button class="btn" aria-label="Save"><svg><use href="#store"/></svg></button></div>
          <div class="row attr"><label for="attr">Attribute Type</label><span class="combo"><select id="attr"><option>Cell Data</option></select></span></div>
          <h3>X Axis Parameters</h3>
          <label class="check"><input type="checkbox" checked>Use Index For XAxis</label>
          <div class="row attr"><label for="xarr">X Array Name</label><span class="combo off"><select id="xarr" disabled><option>h</option></select></span></div>
          <h3>Series Parameters</h3>
          <div class="table-box">
            <table>
              <thead><tr><th class="c1"><div><label><input type="checkbox" checked>Variable</label><b class="up"></b></div></th><th class="c2"></th><th>Legend Name</th></tr></thead>
              <tbody>
                <tr><td><label><input type="checkbox" checked>hu</label></td><td><i class="swatch red"></i></td><td class="name">hu</td></tr>
                <tr class="alt"><td><label><input type="checkbox" checked>h</label></td><td><i class="swatch black"></i></td><td class="name">h</td></tr>
              </tbody>
            </table>
          </div>
          <div class="row line"><label for="thick">Line Thickness</label><span class="spin off"><input id="thick" value="1" disabled><span class="steps"><button disabled aria-label="Thicker" class="up"></button><button disabled aria-label="Thinner" class="down"></button></span></span></div>
          <div class="row line"><label for="lstyle">Line Style</label><span class="combo off"><select id="lstyle" disabled><option>None</option></select></span></div>
          <div class="row line"><label for="mstyle">Marker Style</label><span class="combo off"><select id="mstyle" disabled><option>None</option></select></span></div>
        </div>
        <div class="scroll"><b class="up"></b><span class="thumb t-props"></span><span class="trough"></span><b class="down"></b></div>
      </div>
    </aside>
    <div class="vsplit"></div>

    <section class="views">
      <div class="tabs">
        <button class="tab"><svg><use href="#float"/></svg>Layout #2<svg><use href="#close"/></svg></button>
        <button class="tab"><svg><use href="#win"/></svg>Layout #3<svg><use href="#close"/></svg></button>
        <button class="tab"><svg><use href="#win"/></svg>Layout #4<svg><use href="#close"/></svg></button>
        <button class="tab"><svg><use href="#win"/></svg>Layout #5<svg><use href="#close"/></svg></button>
        <button class="tab"><svg><use href="#float"/></svg>Layout #6<svg><use href="#close"/></svg></button>
        <button class="tab"><svg><use href="#float"/></svg>Layout #7<svg><use href="#close"/></svg></button>
        <button class="tab"><svg><use href="#win"/></svg>Layout #8<svg><use href="#close"/></svg></button>
        <button class="tab"><svg><use href="#win"/></svg>Layout #9<svg><use href="#close"/></svg></button>
        <button class="tab long"><svg><use href="#win"/></svg>Layout #10<svg><use href="#close"/></svg></button>
        <button class="tab long"><svg><use href="#win"/></svg>Layout #11<svg><use href="#close"/></svg></button>
        <button class="tab long"><svg><use href="#win"/></svg>Layout #12<svg><use href="#close"/></svg></button>
        <button class="tab long"><svg><use href="#win"/></svg>Layout #13<svg><use href="#close"/></svg></button>
        <button class="tab long on"><svg><use href="#win"/></svg>Layout #14<svg><use href="#close"/></svg></button>
        <button class="tab add">+</button>
        <button class="arrow" aria-label="Scroll tabs left"><svg viewBox="0 0 6 10"><path d="M6 0v10L0 5z" fill="#333"/></svg></button><button class="arrow" aria-label="Scroll tabs right"><svg viewBox="0 0 6 10"><path d="M0 0v10l6-5z" fill="#c4c0bc"/></svg></button>
      </div>
      <div class="view-bar">
        <i class="sep"></i>
        <button aria-label="Add selection"><svg><use href="#s-add"/></svg></button>
        <button aria-label="Subtract selection"><svg><use href="#s-sub"/></svg></button>
        <button aria-label="Toggle selection"><svg><use href="#s-tog"/></svg></button>
        <i class="sep"></i>
        <button aria-label="Select polygon"><svg><use href="#s-poly"/></svg></button>
        <button aria-label="Select rectangle"><svg><use href="#s-box"/></svg></button>
        <strong>LineChartView14</strong>
        <button class="btn" aria-label="Split horizontal"><svg><use href="#split-h"/></svg></button>
        <button class="btn" aria-label="Split vertical"><svg><use href="#split-v"/></svg></button>
        <button class="btn" aria-label="Maximize view"><svg><use href="#win"/></svg></button>
        <button class="btn" aria-label="Undock view"><svg><use href="#float"/></svg></button>
        <button class="btn" aria-label="Close view"><svg><use href="#close"/></svg></button>
      </div>
      <div class="chart-frame">
        <svg id="chart" viewBox="0 0 1608 804" role="img" aria-label="Line chart of h and hu"></svg>
        <form class="dialog">
          <div class="dlg-head"><button type="button">Abbrechen</button><button type="button" class="primary">Bildschirmfoto aufnehmen</button></div>
          <div class="dlg-body">
            <p class="crumb">Anwendung</p>
            <h4>Bildschirmfoto aufnehmen</h4>
            <div class="dlg-mode">
              <svg><use href="#shot"/></svg>
              <div>
                <label><input type="radio" name="m" checked>Gesamten Bildschirm aufnehmen</label>
                <label><input type="radio" name="m">Aktuelles Fenster aufnehmen</label>
                <label><input type="radio" name="m">Aufnahmebereich auswählen</label>
              </div>
            </div>
            <div class="delay"><label for="delay">Bildschirmfoto verzögert aufnehmen nach</label><span class="num"><input id="delay" value="0"><button type="button" class="dim">−</button><button type="button">+</button></span><span>Sekunden</span></div>
            <h4>Effekte</h4>
            <label class="fx"><input type="checkbox">Zeiger einbeziehen</label>
            <label class="fx dim"><input type="checkbox" checked>Fensterrahmen mit aufnehmen</label>
            <div class="effect"><label for="fx">Effekt anwenden:</label><span class="combo"><select id="fx"><option>Keiner</option></select></span></div>
            <button type="button" class="hilfe">Hilfe</button>
          </div>
        </form>
      </div>
    </section>
  </main>

  <footer class="status"><button class="btn" disabled aria-label="Abort">✖</button><div class="progress"></div></footer>
</div>

<div class="backdrop">
  <span>master</span><span>⟳</span><span>⊗ 0</span><span>▲ 2</span>
  <span class="push">main(int argc, char ** argv)</span><span>Zeile 62, Spalte 67</span><span>Tabulatorgröße: 4</span><span>UTF-8</span><span>LF</span><span>C++</span><span>Linux Native</span><span class="bug">●</span><span>☺</span>
</div>

<nav class="taskbar">
  <div class="launch"><button class="menu"><svg><use href="#cog"/></svg>Menü</button><button aria-label="Desktop folder"><svg><use href="#folder-d"/></svg></button><button aria-label="Files"><svg><use href="#folder"/></svg></button></div>
  <div class="tasks">
    <button><svg><use href="#subl"/></svg>dambreak.hpp - S...</button>
    <button><svg><use href="#folder"/></svg>[img]</button>
    <button><svg><use href="#fox"/></svg>[assignment.pdf - ...</button>
    <button><svg><use href="#tex"/></svg>Document : /home...</button>
    <button><svg><use href="#folder"/></svg>[bin]</button>
    <button><svg><use href="#folder"/></svg>Bilder</button>
    <button class="on"><svg><use href="#pv"/></svg>ParaView 5.4.1 64...</button>
    <button><svg><use href="#gcalc"/></svg>gnome-calculator</button>
    <button><svg><use href="#gcalc"/></svg>gnome-calculator</button>
    <button><svg><use href="#gcalc"/></svg>gnome-calculator</button>
    <button><svg><use href="#xour"/></svg>Xournal</button>
  </div>
  <div class="tray"><svg><use href="#person"/></svg><svg><use href="#wifi"/></svg><svg><use href="#vol"/></svg><svg><use href="#batt"/></svg><span>100%</span><span class="lang">DE</span><time>15:44</time><svg><use href="#desk"/></svg></div>
</nav>
<script src="chart.js"></script>
</body>
</html>
```
FILE: styles.css
```css
* { box-sizing: border-box; }
body {
  margin: 0;
  min-height: 100vh;
  display: flex;
  flex-direction: column;
  background: #0a5c9c;
  font: 12px/16px "DejaVu Sans", sans-serif;
  color: #111;
}
button, input, select { font: inherit; color: inherit; margin: 0; padding: 0; border: 0; background: none; }
svg { display: block; flex: none; }
ul, h1, h2, h3, h4, p { margin: 0; padding: 0; font-size: inherit; list-style: none; }
.defs { position: absolute; width: 0; height: 0; }

/* window frame */
.window {
  flex: 1;
  display: flex;
  flex-direction: column;
  background: #efebe7;
  border: solid #2e3432;
  border-width: 0 4px 3px 3px;
}
.titlebar {
  display: flex;
  align-items: center;
  height: 21px;
  margin: 0 -4px 0 -3px;
  padding-right: 9px;
  border-top: 1px solid #101010;
  background: linear-gradient(rgba(44,44,44,0) 30%, #2e2f2f), linear-gradient(90deg, #2a2a29 5%, #2a4866 45%, #2a4866 55%, #2a2a29 95%);
  color: #fff;
}
.titlebar h1 { flex: 1; text-align: center; font-size: 13px; font-weight: bold; }
.winbtns { display: flex; gap: 8px; }
.winbtns svg { width: 9px; height: 9px; }
.menubar { display: flex; height: 19px; padding-left: 2px; border-bottom: 1px solid #cfcac6; }
.menubar button { padding: 0 8px; }

/* toolbars */
.toolbar {
  display: flex;
  align-items: center;
  height: 39px;
  padding-left: 3px;
  background: linear-gradient(#f8f5f1, #eeebe6);
  border-bottom: 1px solid #b5b0ac;
}
.grip { width: 10px; height: 18px; flex: none; background: radial-gradient(circle, #b8b3ae 1px, transparent 1px) 1px 0 / 3px 3px; background-clip: content-box; padding: 0 3px 0 2px; }
.grip.wide { width: 17px; padding: 0 5px 0 7px; }
.sep { width: 6px; height: 19px; flex: none; background: linear-gradient(#cfcac6, #cfcac6) 3px 0 / 1px 100% no-repeat; }
.tool { width: 32px; height: 30px; display: flex; align-items: center; justify-content: center; position: relative; }
.tool svg { width: 24px; height: 24px; overflow: visible; }
.filters .tool { width: 33px; }
.filters .grip { width: 9px; }
.filters .wide { width: 15px; padding: 0 5px; }
.filters { height: 38px; }
.drop::after { content: ""; position: absolute; right: 1px; bottom: 2px; border: 3px solid transparent; border-top-color: #333; }
.sq-dark { --sq: #9b9996; --arr: #e2e0dd; }
.ar-dark { --sq: #dedcd9; --arr: #a8a6a3; }
.tool text { font: bold 9px "Liberation Sans", sans-serif; fill: #9a9895; }
.time-label { padding: 0 3px 0 0; }
.field { height: 22px; border: 1px solid #a9a4a0; border-radius: 3px; background: #fff; padding: 0 3px; min-width: 0; }
.field:disabled { background: #edeae6; color: #b3afab; }
.time { width: 108px; }
.spin { display: flex; width: 48px; height: 22px; margin: 0 2px; border: 1px solid #a9a4a0; border-radius: 3px; background: #fff; }
.spin input { flex: 1; min-width: 0; padding-left: 4px; }
.steps { display: flex; flex-direction: column; width: 14px; border-left: 1px solid #b9b4b0; background: linear-gradient(#fff, #efece8); }
.steps button { flex: 1; }
.up, .down { display: flex; align-items: center; justify-content: center; color: #555; }
.up::before, .down::before { content: ""; border: 4px solid transparent; border-top-width: 0; border-bottom-color: currentColor; }
.down::before { border-width: 4px 4px 0; border-top-color: currentColor; }
.steps .off { color: #aaa; }
.combo { display: block; position: relative; }
.combo select { appearance: none; display: block; width: 100%; height: 22px; padding: 0 4px; border: 1px solid #a9a4a0; border-radius: 3px; background: linear-gradient(#fefdfc, #edeae7); opacity: 1; }
.combo::after { content: ""; position: absolute; right: 7px; top: 9px; border: 4px solid transparent; border-top: 4px solid #555; border-bottom: 0; }
.off.combo select { color: #b9b5b1; border-color: #c2bdb9; background: linear-gradient(#f8f6f4, #edeae7); }
.off.combo::after { border-top-color: #cfcbc8; }
.w150 { width: 150px; }
.w72 { width: 72px; margin-left: 4px; }
.btn { display: flex; align-items: center; justify-content: center; border: 1px solid #a9a4a0; border-radius: 3px; background: linear-gradient(#fefdfd, #edeae7); }
.btn svg { width: 16px; height: 16px; }
.btn:disabled { color: #b3afab; border-color: #c2bdb9; }

/* left dock */
.work { flex: 1; display: flex; min-height: 0; }
.side { width: 292px; flex: none; display: flex; flex-direction: column; padding-bottom: 8px; }
.dock-head { display: flex; align-items: center; gap: 2px; height: 21px; padding: 0 2px 0 4px; }
.dock-head span { flex: 1; }
.dock-head svg { width: 12px; height: 12px; }
.tree-box { display: flex; height: 284px; border: 1px solid #b5b0ac; background: #fff; overflow: hidden; }
.tree { flex: 1; padding-top: 1px; }
.tree li { display: flex; align-items: center; height: 22px; padding-left: 4px; font-family: "DejaVu Sans Mono", monospace; font-size: 13px; background: linear-gradient(#8a8a8a, #8a8a8a) 35px 0 / 1px 100% no-repeat; }
.tree .root { padding-left: 31px; font: inherit; gap: 7px; background-size: 1px 4px; }
.root svg { width: 8px; height: 14px; }
.eye { width: 14px; height: 12px; margin-right: 17px; }
.tree i { width: 8px; height: 1px; margin: 0 1px 0 1px; background: #8a8a8a; }
.cube { width: 16px; height: 16px; margin-right: 3px; }
.scroll { width: 14px; flex: none; display: flex; flex-direction: column; border-left: 1px solid #b5b0ac; background: #e4e2df; }
.scroll b { height: 14px; background: #f6f4f2; }
.thumb { background: linear-gradient(90deg, #fff, #eeebe8); border: solid #b5b0ac; border-width: 1px 0; }
.trough { flex: 1; }
.scroll b:last-child { border-top: 1px solid #b5b0ac; }
.t-tree { height: 194px; }
.t-props { height: 170px; }
.splitter { width: 18px; height: 3px; margin: 2px 0; align-self: center; background: radial-gradient(circle, #b8b3ae 1px, transparent 1px) 0 0 / 3px 3px; }
.dock-tabs { display: flex; align-items: flex-end; height: 24px; border-bottom: 1px solid #b5b0ac; }
.dock-tabs button { height: 22px; width: 94px; border: 1px solid #b5b0ac; border-bottom: 0; border-left: 0; background: #dcd9d5; }
.dock-tabs .on { height: 24px; width: 90px; border-left: 1px solid #b5b0ac; background: linear-gradient(#fbfaf8, #efebe7); margin-bottom: -1px; border-radius: 3px 3px 0 0; }
.props { height: 22px; }
.actions, .search { display: flex; gap: 3px; padding: 0 9px; }
.actions { margin-top: 7px; }
.actions .btn { height: 24px; flex: 1; }
.actions .help { flex: none; width: 28px; font-size: 16px; font-weight: bold; color: #2c8cd4; }
.search { margin-top: 6px; }
.search .field { flex: 1; }
.search .btn { width: 24px; height: 22px; }
.search ::placeholder { color: #8c8985; opacity: 1; }
.props-scroll { flex: 1; display: flex; margin: 7px 9px 0 9px; min-height: 0; }
.props-body { flex: 1; min-width: 0; }
.group { display: flex; align-items: center; gap: 4px; }
.group h2 { flex: 1; display: flex; align-items: center; gap: 8px; height: 26px; padding-left: 10px; border: 1px solid #b5b0ac; font-weight: bold; white-space: nowrap; overflow: hidden; }
.group h2 svg { width: 14px; height: 6px; }
.group .btn { width: 28px; height: 24px; }
input[type=checkbox] { appearance: none; width: 13px; height: 13px; flex: none; border: 1px solid #b0aba7; background: #fff; display: flex; align-items: center; justify-content: center; }
input[type=checkbox]:checked::before { content: "✔"; font-size: 11px; line-height: 11px; color: #111; }
.list { height: 68px; margin: 6px 0; border: 1px solid #b5b0ac; background: #fff; }
.list label { display: flex; align-items: center; height: 16px; padding-left: 3px; gap: 6px; }
.list label svg { width: 15px; height: 15px; margin-right: 2px; }
.list .list-head { height: 20px; gap: 2px; border-bottom: 1px solid #b5b0ac; background: linear-gradient(#fbfaf8, #edeae6); }
.row { display: flex; height: 22px; }
.row label { white-space: nowrap; }
.row.attr { margin-top: 10px; }
.attr label { width: 92px; line-height: 14px; }
.row .combo, .row .spin { flex: 1; }
h3 { margin-top: 6px; height: 18px; border-bottom: 1px solid #9c9894; }
.check { display: flex; align-items: center; gap: 6px; height: 18px; margin-top: 6px; }
.check + .row.attr { margin-top: 5px; }
.table-box { height: 74px; margin: 6px 0 5px; border: 1px solid #b5b0ac; background: #fff; overflow: hidden; }
table { width: 100%; border-collapse: separate; border-spacing: 0; table-layout: fixed; }
th, td { padding: 0; height: 18px; font-weight: normal; text-align: left; line-height: 16px; }
th { height: 17px; background: linear-gradient(#fbfaf8, #edeae6); border-bottom: 1px solid #b5b0ac; text-align: center; }
th + th { border-left: 1px solid #c5c0bc; }
.c1 { width: 100px; }
.c2 { width: 26px; }
.c1 div { display: flex; align-items: center; justify-content: space-between; padding: 0 4px 0 6px; }
th.c1 label { gap: 0; }
td label, th label { display: flex; align-items: center; gap: 7px; }
td label { padding-left: 3px; }
td.name { padding-left: 4px; }
.alt { background: #f5f4f3; }
.swatch { display: block; width: 16px; height: 16px; margin-left: 3px; }
.red { background: #e41a1c; }
.black { background: #000; }
.row.line { margin-bottom: 4px; line-height: 22px; }
.line label { width: 132px; }
.line .spin { margin: 0; border-color: #c2bdb9; background: #edeae6; color: #b3afab; }
.off .steps button { color: #ddd; }
.vsplit { width: 6px; }

/* right side */
.views { flex: 1; min-width: 0; display: flex; flex-direction: column; border-left: 1px solid #a9a4a0; border-bottom: 1px solid #a9a4a0; padding: 0 1px 0 1px; background: #fdf9f6; }
.tabs { display: flex; align-items: flex-end; height: 26px; padding-left: 2px; border-bottom: 1px solid #a9a4a0; background: #efebe7; margin: 0 -1px; }
.tab { flex: 116 1 0; display: flex; align-items: center; justify-content: center; gap: 3px; height: 22px; white-space: nowrap; border: 1px solid #b5b0ac; border-width: 1px 1px 0 0; background: linear-gradient(#e9e5e2, #e3dfdb); border-radius: 2px 2px 0 0; }
.tab svg { width: 12px; height: 12px; }
.tab.long { flex-grow: 124; }
.tab.on { height: 25px; margin-bottom: -1px; background: #fdfbf9; }
.tab.add { flex: 0 0 33px; margin-right: 1px; }
.arrow { display: flex; align-items: center; justify-content: center; width: 15px; height: 24px; border: 1px solid #b5b0ac; background: #f6f4f2; }
.arrow svg { width: 5px; height: 9px; }
.view-bar { display: flex; align-items: center; gap: 1px; height: 21px; }
.view-bar > button { width: 19px; height: 19px; display: flex; align-items: center; justify-content: center; }
.view-bar svg { width: 11px; height: 11px; }
.view-bar > .btn { width: 20px; }
.view-bar .sep { width: 4px; height: 8px; }
.view-bar strong { margin: 0 10px 0 auto; text-decoration: underline; }
.chart-frame { flex: 1; min-height: 0; position: relative; margin-top: 1px; border: 2px solid #00f; background: #fff; }
#chart { width: 100%; height: 100%; }
#chart text { font: 12px "Liberation Sans", sans-serif; fill: #000; }
#chart .key { font-size: 13px; }

/* fading screenshot dialog */
.dialog { position: absolute; left: 438px; top: 152px; width: 434px; opacity: .14; border: 1px solid #999; border-radius: 5px 5px 0 0; background: #dcdcdc; box-shadow: 0 3px 16px 4px rgba(0,0,0,.45); font: 11px/16px "DejaVu Sans Condensed", "Noto Sans", sans-serif; color: #222; }
.dlg-head { display: flex; justify-content: space-between; padding: 5px; height: 38px; background: #f2f2f2; border-bottom: 1px solid #888; border-radius: 5px 5px 0 0; }
.dlg-head button { width: 160px; border: 1px solid #aaa; border-radius: 3px; background: #ddd; }
.dlg-head .primary { background: #0a6cc8; color: #fff; border-color: #0a6cc8; }
.dlg-body { padding: 6px 8px 8px; }
.crumb { padding: 0 2px 0; height: 18px; border-bottom: 1px solid #bbb; }
.dialog h4 { line-height: 18px; }
.dlg-mode { display: flex; align-items: center; gap: 12px; }
.dlg-mode svg { width: 40px; height: 40px; }
.dlg-mode label { display: flex; align-items: center; gap: 4px; height: 21px; }
.dialog input[type=radio] { appearance: none; width: 13px; height: 13px; border: 1px solid #777; border-radius: 50%; background: #fff; }
.dialog input[type=radio]:checked { background: radial-gradient(circle, #222 2px, #fff 3px); }
.delay { display: flex; align-items: center; gap: 6px; padding-left: 50px; height: 36px; white-space: nowrap; }
.delay label { flex: none; }
.num { display: flex; width: 94px; height: 27px; border: 1px solid #bbb; background: #fff; }
.num input { width: 38px; padding-left: 6px; }
.num button { width: 27px; border-left: 1px solid #ddd; font-size: 14px; font-weight: bold; }
.dlg-body > .delay + h4 { margin-top: 8px; }
.fx { display: flex; align-items: center; gap: 4px; height: 21px; padding-left: 13px; }
.dim { opacity: .5; }
.effect { display: flex; align-items: center; gap: 10px; padding-left: 10px; height: 34px; }
.effect label { opacity: .5; }
.effect .combo { width: 109px; }
.effect select { height: 27px; padding-left: 8px; }
.hilfe { display: block; width: 70px; height: 28px; margin-top: 12px; border: 1px solid #bbb; border-radius: 3px; background: #ddd; }

.status { display: flex; align-items: center; height: 28px; padding: 0 28px 1px 0; }
.status .btn { width: 20px; height: 19px; margin-left: 946px; font-size: 11px; }
.progress { flex: 1; height: 22px; border: 1px solid #a9a4a0; border-radius: 3px; }

/* editor status line behind the window */
.backdrop { display: flex; align-items: flex-end; gap: 20px; height: 9px; overflow: hidden; padding: 0 14px 3px 28px; background: linear-gradient(#0a3454, #0a64a8); color: #7f98ac; font: 11px/14px "Noto Sans", sans-serif; }
.backdrop span { white-space: pre; }
.push { margin-left: auto; }
.bug { color: #c81c1c; }

.taskbar { display: flex; height: 27px; border-top: 1px solid #222; background: #505050; color: #e8e8e8; font-size: 11px; }
.launch { display: flex; align-items: center; width: 144px; flex: none; padding-left: 2px; gap: 9px; }
.launch svg { width: 20px; height: 20px; }
.launch .menu { display: flex; align-items: center; gap: 5px; font-weight: bold; }
.launch .menu svg { width: 15px; height: 15px; }
.launch button + button + button { margin-left: 10px; }
.tasks { flex: 1; display: flex; gap: 1px; min-width: 0; }
.tasks button { flex: 1 1 0; min-width: 0; display: flex; align-items: center; gap: 3px; padding-left: 3px; border: 1px solid #7c7c7c; border-bottom: 0; background: linear-gradient(#5c5c5c, #747474); white-space: nowrap; overflow: hidden; }
.tasks svg { width: 17px; height: 17px; }
.tasks .on { background: linear-gradient(#9a9a9a, #7c7c7c); }
.tray { display: flex; align-items: center; width: 203px; flex: none; padding-left: 6px; gap: 4px; font-size: 11px; font-weight: bold; color: #d0d0d0; }
.tray svg { width: 15px; height: 15px; }
.tray .lang { color: #3c4c9c; font-weight: normal; margin: 0 5px; }
.tray time { margin-right: 1px; }
```
FILE: chart.js
```js
const NS = "http://www.w3.org/2000/svg";
const chart = document.getElementById("chart");
const X = v => 26.5 + 15.585 * v;
const Y = v => 775.3 - 25.18 * v;

function add(tag, attrs, text) {
  const el = document.createElementNS(NS, tag);
  for (const k in attrs) el.setAttribute(k, attrs[k]);
  if (text !== undefined) el.textContent = text;
  chart.appendChild(el);
}
function line(x1, y1, x2, y2, color, width) {
  add("line", { x1, y1, x2, y2, stroke: color, "stroke-width": width || 1 });
}

// grid
for (let v = 5; v <= 100; v += 5) line(Math.round(X(v)) + 0.5, 21, Math.round(X(v)) + 0.5, 776, "#f2f2f2");
for (let v = 2; v <= 28; v += 2) line(30, Math.round(Y(v)) - 0.5, 1586, Math.round(Y(v)) - 0.5, "#f2f2f2");

// axes, ticks and labels
line(30, 20, 30, 777, "#000");
line(30, 776.5, 1587, 776.5, "#000");
for (let v = 5; v <= 100; v += 5) {
  line(X(v), 777, X(v), 781, "#000");
  add("text", { x: X(v), y: 791, "text-anchor": "middle" }, v);
}
for (let v = 0; v <= 28; v += 2) {
  line(25, Math.round(Y(v)) - 0.5, 30, Math.round(Y(v)) - 0.5, "#000");
  add("text", { x: 25, y: Math.round(Y(v)) + 3, "text-anchor": "end" }, v);
}

// series, as [index, value] knots
const h = [[0.25, 8], [24, 8], [27, 7.99], [30, 7.95], [32, 7.87], [34, 7.69], [35, 7.56], [36, 7.41], [37, 7.23], [38, 7.04],
  [39, 6.82], [40, 6.58], [41, 6.33], [42, 6.07], [43, 5.8], [44, 5.53], [45, 5.25], [46, 4.98], [47, 4.72], [48, 4.47],
  [49, 4.27], [50, 4.18], [60, 4.17], [61, 4.19], [63, 4.24], [65, 4.34], [67, 4.49], [69, 4.65], [71, 4.79], [73, 4.89],
  [75, 4.95], [77, 4.98], [80, 5], [99, 5]];
const hu = [[0.25, 0], [23, 0], [26, 0.02], [28, 0.09], [29, 0.19], [30, 0.36], [31, 0.65], [32, 1.12], [33, 1.76], [34, 2.62],
  [35, 3.68], [36, 4.92], [37, 6.3], [38, 7.8], [39, 9.3], [40, 10.86], [41, 12.4], [42, 13.85], [43, 15.18], [44, 16.42],
  [45, 17.52], [46, 18.46], [47, 19.25], [48, 19.82], [49, 20.18], [50, 20.32], [54, 20.26], [58, 20.16], [60, 20.15],
  [61, 20.25], [62, 20.45], [63, 20.8], [64, 21.32], [65, 22], [66, 22.85], [67, 23.8], [68, 24.83], [69, 25.87],
  [70, 26.82], [71, 27.64], [72, 28.34], [73, 28.9], [74, 29.32], [75, 29.6], [76, 29.79], [77, 29.89], [78, 29.94], [79, 29.97]];
for (const [data, color] of [[h, "#000"], [hu, "#e41a1c"]]) {
  add("polyline", { points: data.map(p => X(p[0]) + "," + Y(p[1])).join(" "), fill: "none", stroke: color, "stroke-width": 2 });
}

// legend
add("rect", { x: 1538.5, y: 20.5, width: 49, height: 39, fill: "#fff", stroke: "#000" });
line(1544, 31.5, 1566, 31.5, "#000", 2);
line(1544, 48.5, 1566, 48.5, "#e41a1c", 2);
add("text", { x: 1568, y: 36, class: "key" }, "h");
add("text", { x: 1568, y: 53, class: "key" }, "hu");
```
